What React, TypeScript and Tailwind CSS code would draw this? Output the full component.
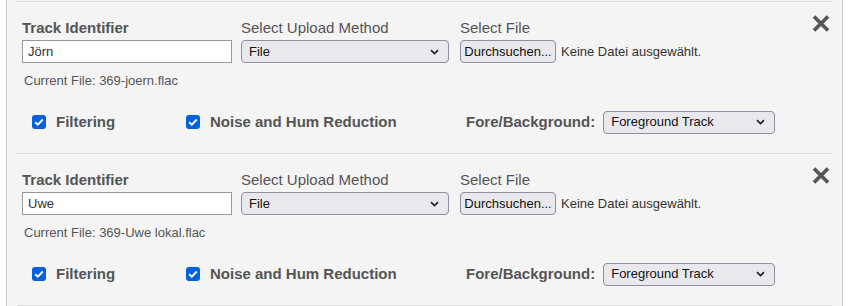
import React from "react"

type Track = { name: string; file: string }

const tracks: Track[] = [
    { name: "Jörn", file: "369-joern.flac" },
    { name: "Uwe", file: "369-Uwe lokal.flac" },
]

function Chevron() {
    return (
        <svg width="9" height="6" viewBox="0 0 9 6" className="shrink-0">
            <path d="M1 1.2 L4.5 4.6 L8 1.2" fill="none" stroke="#222" strokeWidth="1.7" />
        </svg>
    )
}

function FakeSelect({ value, width }: { value: string; width: string }) {
    return (
        <div className={`${width} h-[23px] flex items-center justify-between pl-[7px] pr-[9px] bg-[#e9e9ed] border border-[#8f8f9d] rounded-[4px] text-[13px] text-[#111]`}>
            <span>{value}</span>
            <Chevron />
        </div>
    )
}

function Check({ label, className }: { label: string; className?: string }) {
    return (
        <div className={`flex items-center gap-[10px] ${className ?? ""}`}>
            <span className="w-[14px] h-[14px] rounded-[3px] bg-[#0060df] flex items-center justify-center">
                <svg width="10" height="8" viewBox="0 0 10 8">
                    <path d="M1.2 4.2 L3.8 6.6 L8.8 1.5" fill="none" stroke="white" strokeWidth="1.9" />
                </svg>
            </span>
            <span className="text-[15px] font-bold text-[#555]">{label}</span>
        </div>
    )
}

function TrackRow({ track }: { track: Track }) {
    return (
        <div className="mx-[10px] border-b border-[#dddddd] pl-[5px] pr-[2px] pt-[16px] pb-[20px]">
            <div className="flex items-start">
                <div className="w-[210px]">
                    <div className="h-[20px] leading-[20px] text-[15px] font-bold text-[#555]">Track Identifier</div>
                    <div className="mt-[2px] h-[23px] border border-[#999] bg-white flex items-center pl-[5px] text-[13px] text-[#333]">{track.name}</div>
                </div>
                <div className="ml-[9px] w-[208px]">
                    <div className="h-[20px] leading-[20px] text-[15px] text-[#555]">Select Upload Method</div>
                    <div className="mt-[2px]">
                        <FakeSelect value="File" width="w-[208px]" />
                    </div>
                </div>
                <div className="ml-[11px]">
                    <div className="h-[20px] leading-[20px] text-[15px] text-[#555]">Select File</div>
                    <div className="mt-[2px] flex items-center">
                        <div className="h-[23px] w-[96px] flex items-center justify-center bg-[#e9e9ed] border border-[#8f8f9d] rounded-[4px] text-[13px] text-[#111]">Durchsuchen...</div>
                        <span className="ml-[5px] text-[13px] text-[#333]">Keine Datei ausgewählt.</span>
                    </div>
                </div>
                <div className="ml-auto mt-[-3px]">
                    <svg width="18" height="17" viewBox="0 0 18 17">
                        <path d="M2 1.5 L16 15.5 M16 1.5 L2 15.5" stroke="#555" strokeWidth="3.6" />
                    </svg>
                </div>
            </div>
            <div className="mt-[10px] h-[16px] leading-[16px] text-[13px] text-[#555] pl-[2px]">Current File: {track.file}</div>
            <div className="mt-[22px] h-[22px] flex items-center pl-[10px]">
                <Check label="Filtering" className="w-[154px]" />
                <Check label="Noise and Hum Reduction" className="w-[280px]" />
                <span className="text-[15px] font-bold text-[#555]">Fore/Background:</span>
                <div className="ml-[8px]">
                    <FakeSelect value="Foreground Track" width="w-[172px]" />
                </div>
            </div>
        </div>
    )
}

export default function App() {
    return (
        <div className="w-[850px] h-[306px] bg-white overflow-hidden font-['Liberation_Sans',Arial,sans-serif]">
            <div className="ml-[6px] w-[837px] h-full border-x border-[#cccccc] bg-[#f4f4f4]">
                <div className="mx-[10px] h-[2px] border-b border-[#dddddd]" />
                {tracks.map((track) => (
                    <TrackRow key={track.name} track={track} />
                ))}
            </div>
        </div>
    )
}
